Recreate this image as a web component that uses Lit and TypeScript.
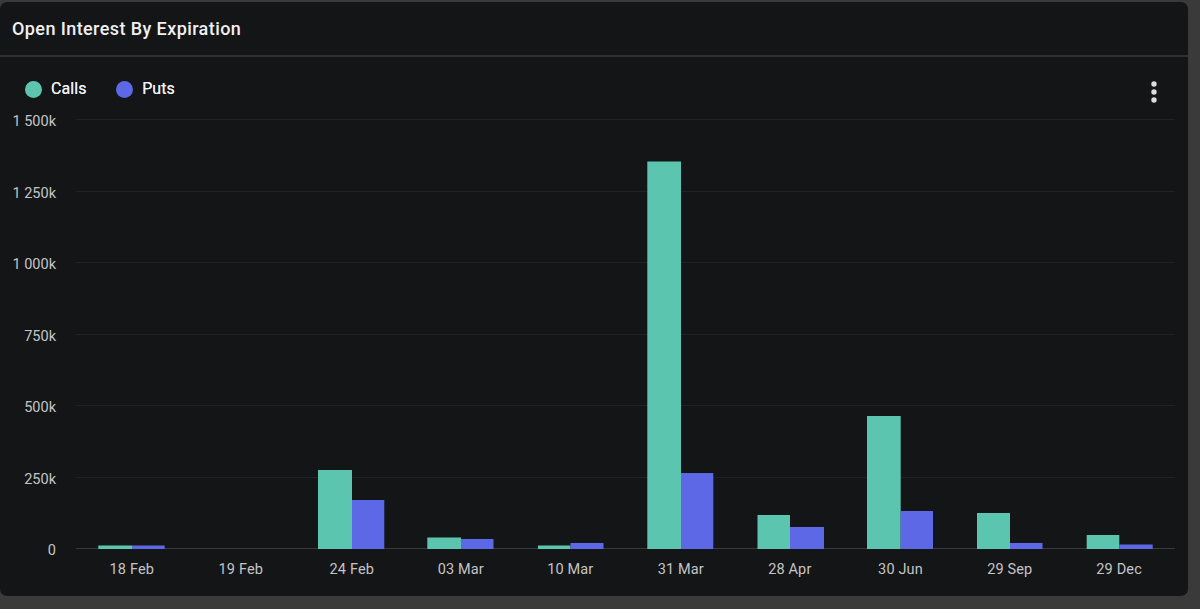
import { LitElement, html, css, svg } from "lit";
import { customElement } from "lit/decorators.js";

const LEFT = 76;
const BASE = 549;
const gridY = (i: number) => Math.floor(119.5 + 71.5 * i) + 0.5;

const yTicks = ["1 500k", "1 250k", "1 000k", "750k", "500k", "250k", "0"];
// label, left edge, split, right edge, calls top, puts top
const data: [string, number, number, number, number, number][] = [
  ["18 Feb", 98.3, 132, 164.7, 545.5, 545.5],
  ["19 Feb", 208, 241, 274, 549, 549],
  ["24 Feb", 318, 352, 384.3, 470, 500],
  ["03 Mar", 427.3, 461, 493.5, 537.5, 539],
  ["10 Mar", 538, 570.5, 603.5, 545.5, 543],
  ["31 Mar", 647.3, 681, 713.3, 161.5, 473],
  ["28 Apr", 757.5, 790, 824, 515, 527],
  ["30 Jun", 867, 900.7, 933, 416, 511],
  ["29 Sep", 977, 1010, 1042.5, 513, 543],
  ["29 Dec", 1086.7, 1119.3, 1152.7, 535, 544.5],
];

@customElement("app-root")
export class AppRoot extends LitElement {
  static styles = css`
    :host {
      display: block;
      width: 1200px;
      height: 609px;
      overflow: hidden;
      background: #3a3a3b;
      font-family: Roboto, "Liberation Sans", sans-serif;
    }
    .page {
      padding: 2px 12px 13px 0;
      height: 594px;
    }
    .card {
      height: 594px;
      background: #141517;
      border-radius: 7px;
      display: flex;
      flex-direction: column;
      overflow: hidden;
    }
    .head {
      height: 53px;
      flex: none;
      padding: 0 12px;
      display: flex;
      align-items: center;
      border-bottom: 2px solid #2e2f30;
      color: #f0f0f0;
      font-size: 18px;
      font-weight: 500;
      letter-spacing: 0.41px;
    }
    .chart-wrap {
      position: relative;
      flex: 1;
    }
    .legend {
      position: relative;
      display: flex;
      align-items: center;
      gap: 29.5px;
      padding: 23px 0 0 25px;
    }
    .item {
      display: flex;
      align-items: center;
      gap: 9px;
      color: #f0f0f0;
      font-size: 16px;
      line-height: 18px;
      font-weight: 400;
      letter-spacing: 0.1px;
      text-shadow: 0 0 0.4px #f0f0f0;
    }
    .dot {
      width: 17px;
      height: 17px;
      border-radius: 50%;
    }
    .calls { background: #5cc5af; }
    .puts { background: #5c68e6; }
    .menu {
      position: absolute;
      left: 1150px;
      top: 23px;
    }
    svg.plot {
      position: absolute;
      left: 0;
      top: 0;
      width: 1188px;
      height: 539px;
    }
    .grid { stroke: #212224; stroke-width: 1; }
    .axis { stroke: #38393b; stroke-width: 1; }
    .yl, .xl {
      fill: #c4c4c6;
      font-size: 14.5px;
    }
    .yl { text-anchor: end; }
    .xl { text-anchor: middle; letter-spacing: 0.15px; }
    .c { fill: #5cc5af; }
    .p { fill: #5c68e6; }
  `;

  render() {
    return html`
      <div class="page">
        <div class="card">
          <div class="head">Open Interest By Expiration</div>
          <div class="chart-wrap">
            <svg class="plot" viewBox="0 57 1188 539">
              ${yTicks.map((t, i) => {
                const y = gridY(i);
                return svg`
                  <line class=${i === 6 ? "axis" : "grid"} x1=${LEFT} x2="1175" y1=${y} y2=${y}></line>
                  <text class="yl" x="56" y=${Math.round(120 + 71.5 * i) + 6}>${t}</text>`;
              })}
              ${data.map(([label, a, b, e, c, p]) => svg`
                ${c < BASE ? svg`<rect class="c" x=${a} y=${c} width=${b - a} height=${BASE - c}></rect>` : ""}
                ${p < BASE ? svg`<rect class="p" x=${b} y=${p} width=${e - b} height=${BASE - p}></rect>` : ""}
                <text class="xl" x=${b - 0.2} y="574">${label}</text>`)}
            </svg>
            <div class="legend">
              <div class="item"><span class="dot calls"></span>Calls</div>
              <div class="item"><span class="dot puts"></span>Puts</div>
            </div>
            <svg class="menu" width="8" height="24" viewBox="0 0 8 24">
              <circle cx="4" cy="4" r="2.7" fill="#dcdcdc"></circle>
              <circle cx="4" cy="12" r="2.7" fill="#dcdcdc"></circle>
              <circle cx="4" cy="20" r="2.7" fill="#dcdcdc"></circle>
            </svg>
          </div>
        </div>
      </div>
    `;
  }
}
